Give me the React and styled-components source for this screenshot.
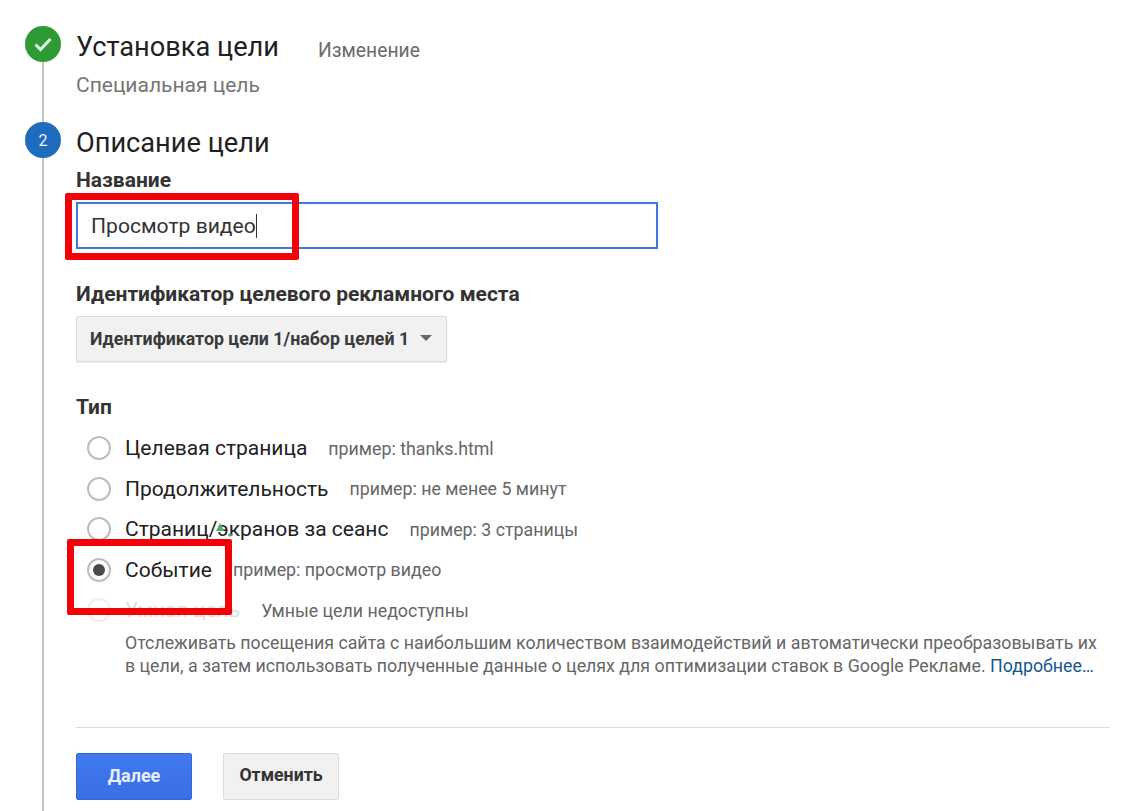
import React from "react";
import styled, { createGlobalStyle } from "styled-components";

const GlobalStyle = createGlobalStyle`
  html, body { margin: 0; padding: 0; background: #fff; }
  body {
    font-family: Roboto, "Noto Sans", "Liberation Sans", sans-serif;
    color: #212121;
    height: 811px;
    overflow: hidden;
  }
`;

const goalTypes = [
  { label: "Целевая страница", hint: "пример: thanks.html" },
  { label: "Продолжительность", hint: "пример: не менее 5 минут" },
  { label: "Страниц/экранов за сеанс", hint: "пример: 3 страницы" },
  { label: "Событие", hint: "пример: просмотр видео", checked: true },
];

const App = () => (
  <Page>
    <GlobalStyle />
    <Step $height={96}>
      <Rail>
        <Badge $color="#2e9a36">
          <svg width="24" height="24" viewBox="0 0 24 24" fill="none">
            <path d="M4.5 12.5l5 5 10-10.5" stroke="#e4f2e4" strokeWidth="3" />
          </svg>
        </Badge>
        <RailLine />
      </Rail>
      <StepBody>
        <TitleRow>
          <StepTitle>Установка цели</StepTitle>
          <EditLink>Изменение</EditLink>
        </TitleRow>
        <StepSummary>Специальная цель</StepSummary>
      </StepBody>
    </Step>

    <Step>
      <Rail>
        <Badge $color="#1f6bbd">2</Badge>
        <RailLine />
      </Rail>
      <StepBody>
        <StepTitle>Описание цели</StepTitle>
        <FieldLabel>Название</FieldLabel>
        <NameInput>
          Просмотр видео
          <Caret />
        </NameInput>

        <TrackingLabel>Идентификатор целевого рекламного места</TrackingLabel>
        <SelectButton>
          Идентификатор цели 1/набор целей 1
          <SelectArrow />
        </SelectButton>

        <TypeLabel>Тип</TypeLabel>
        <RadioList>
          {goalTypes.map((item) => (
            <RadioRow key={item.label}>
              <Radio $checked={item.checked} />
              <RadioLabel>{item.label}</RadioLabel>
              <RadioHint>{item.hint}</RadioHint>
            </RadioRow>
          ))}
          <RadioRow>
            <Radio $disabled />
            <RadioLabel $disabled>Умная цель</RadioLabel>
            <RadioHint>Умные цели недоступны</RadioHint>
          </RadioRow>
        </RadioList>
        <SmartNote>
          Отслеживать посещения сайта с наибольшим количеством взаимодействий и автоматически преобразовывать их
          <br />
          в цели, а затем использовать полученные данные о целях для оптимизации ставок в Google Рекламе.{" "}
          <MoreLink>Подробнее…</MoreLink>
        </SmartNote>

        <Divider />
        <Actions>
          <PrimaryButton>Далее</PrimaryButton>
          <CancelButton>Отменить</CancelButton>
        </Actions>
      </StepBody>
    </Step>

    <Highlight $left={65} $top={193} $width={234} $height={67} />
    <Highlight $left={67} $top={539} $width={165} $height={76} />
    <Speck $left={215} $top={523}>
      <svg width="18" height="14" viewBox="0 0 18 14">
        <path d="M5 0l4 8H1z" fill="#4fb063" />
        <path d="M15 10l2.500 2-2.500 2-2.500-2z" fill="#4fb063" />
      </svg>
    </Speck>
  </Page>
);

const Page = styled.div`
  position: relative;
  width: 1132px;
  height: 811px;
  padding: 26px 0 0 25px;
  box-sizing: border-box;
  overflow: hidden;
`;

const Step = styled.section`
  display: flex;
  gap: 15px;
  height: ${(p) => (p.$height ? `${p.$height}px` : "auto")};
`;

const Rail = styled.div`
  display: flex;
  flex-direction: column;
  align-items: center;
  width: 36px;
  flex: none;
`;

const Badge = styled.div`
  display: flex;
  align-items: center;
  justify-content: center;
  flex: none;
  width: 36px;
  height: 36px;
  border-radius: 50%;
  background: ${(p) => p.$color};
  color: #e8f1fa;
  font-size: 16px;
`;

const RailLine = styled.div`
  flex: 1;
  width: 2px;
  min-height: 700px;
  background: #c4c4c4;
`;

const StepBody = styled.div`
  width: 1034px;
  flex: none;
  padding-top: 4px;
`;

const TitleRow = styled.div`
  display: flex;
  align-items: center;
  gap: 39px;
`;

const StepTitle = styled.h2`
  margin: 0;
  font-size: 27.2px;
  line-height: 34px;
  font-weight: 400;
  color: #212121;
`;

const EditLink = styled.span`
  margin-top: 6px;
  font-size: 19.3px;
  color: #6b6b6b;
`;

const StepSummary = styled.div`
  margin-top: 7px;
  font-size: 21px;
  line-height: 28px;
  color: #757575;
`;

const FieldLabel = styled.div`
  margin-top: 8px;
  font-size: 21px;
  line-height: 24px;
  font-weight: 700;
  color: #333;
`;

const NameInput = styled.div`
  display: flex;
  align-items: center;
  box-sizing: border-box;
  width: 582px;
  height: 47px;
  margin-top: 10px;
  padding-left: 13px;
  border: 2px solid #3f79e0;
  font-size: 21.1px;
  color: #333;
`;

const Caret = styled.span`
  display: inline-block;
  width: 1.5px;
  height: 24px;
  background: #333;
`;

const TrackingLabel = styled(FieldLabel)`
  margin-top: 33px;
`;

const SelectButton = styled.div`
  display: flex;
  width: 371px;
  align-items: center;
  justify-content: space-between;
  box-sizing: border-box;
  height: 46px;
  margin-top: 10px;
  padding: 0 14px 2px 13px;
  background: #f1f1f1;
  border: 1px solid #dcdcdc;
  border-radius: 2px;
  box-shadow: 0 1px 1px rgba(0, 0, 0, 0.08);
  font-size: 17.8px;
  font-weight: 700;
  color: #3a3a3a;
`;

const SelectArrow = styled.span`
  width: 0;
  height: 0;
  border-left: 6px solid transparent;
  border-right: 6px solid transparent;
  border-top: 6px solid #666;
`;

const TypeLabel = styled(FieldLabel)`
  margin-top: 33px;
`;

const RadioList = styled.div`
  display: flex;
  flex-direction: column;
  margin: 9px 0 0 11px;
`;

const RadioRow = styled.div`
  display: flex;
  align-items: center;
  height: 40.5px;
`;

const Radio = styled.span`
  position: relative;
  flex: none;
  box-sizing: border-box;
  width: 24px;
  height: 24px;
  margin-right: 14px;
  border-radius: 50%;
  border: 2px solid ${(p) => (p.$disabled ? "#eeeeee" : "#bdbdbd")};

  &::after {
    content: "";
    display: ${(p) => (p.$checked ? "block" : "none")};
    position: absolute;
    inset: 4px;
    border-radius: 50%;
    background: #4a4a50;
  }
`;

const RadioLabel = styled.span`
  font-size: 21px;
  color: ${(p) => (p.$disabled ? "#dddddd" : "#212121")};
`;

const RadioHint = styled.span`
  margin-left: 21px;
  font-size: 17.8px;
  color: #666;
`;

const SmartNote = styled.p`
  margin: 0 0 0 49px;
  font-size: 17.8px;
  line-height: 23px;
  color: #666;
`;

const MoreLink = styled.span`
  color: #15588f;
`;

const Divider = styled.hr`
  height: 1px;
  margin: 50px 0 0 0;
  border: 0;
  background: #dcdcdc;
`;

const Actions = styled.div`
  display: flex;
  gap: 31px;
  margin-top: 25px;
`;

const PrimaryButton = styled.button`
  width: 116px;
  height: 47px;
  padding: 0 0 2px;
  font: 700 18px Roboto, sans-serif;
  color: #e8eefc;
  background: linear-gradient(#4079f0, #3a6ee6);
  border: 1px solid #3367d6;
  border-radius: 2px;
`;

const CancelButton = styled(PrimaryButton)`
  font-size: 17.7px;
  color: #333;
  background: #f1f1f1;
  border-color: #dcdcdc;
`;

const Highlight = styled.div`
  position: absolute;
  left: ${(p) => p.$left}px;
  top: ${(p) => p.$top}px;
  width: ${(p) => p.$width}px;
  height: ${(p) => p.$height}px;
  box-sizing: border-box;
  border: 7px solid #f40008;
  border-radius: 2px;
`;

const Speck = styled.div`
  position: absolute;
  left: ${(p) => p.$left}px;
  top: ${(p) => p.$top}px;
  line-height: 0;
`;

export default App;
